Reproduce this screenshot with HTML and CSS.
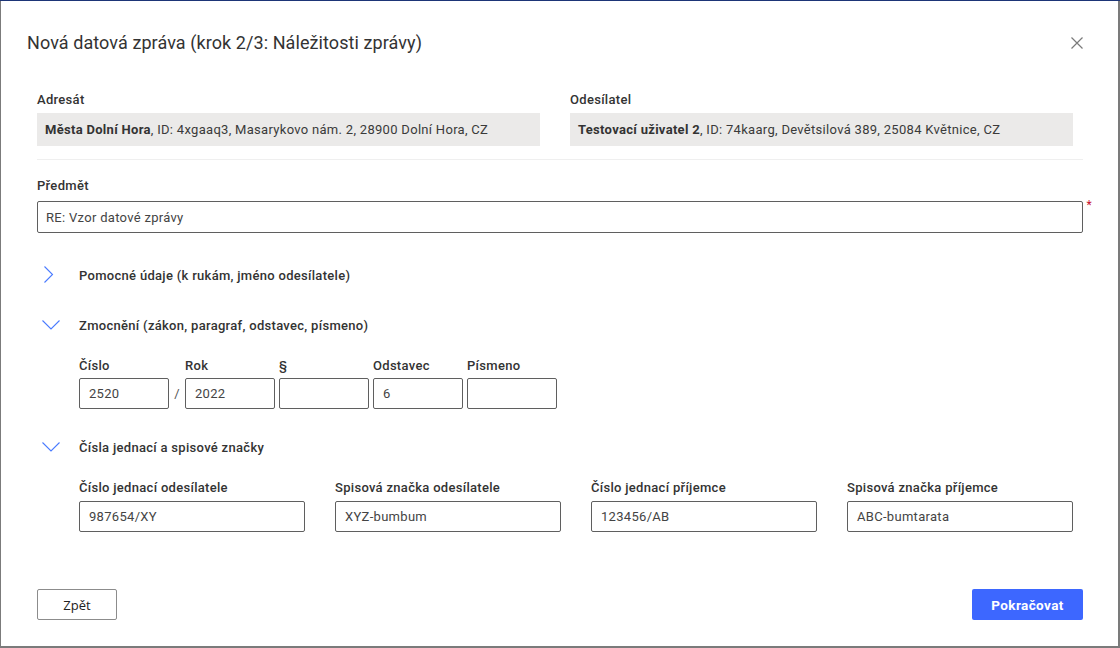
FILE: index.html
```html
<!DOCTYPE html>
<html lang="cs">
<head>
<meta charset="utf-8">
<title>Nová datová zpráva</title>
<link rel="stylesheet" href="styles.css">
</head>
<body>
<div class="backdrop">
  <div class="modal">
    <div class="modal-header">
      <h1 class="title">Nová datová zpráva (krok 2/3: Náležitosti zprávy)</h1>
      <button class="close" aria-label="Zavřít">
        <svg width="12" height="12" viewBox="0 0 12 12"><path d="M0.5 0.5 L11.5 11.5 M11.5 0.5 L0.5 11.5" stroke="#7a7a7a" stroke-width="1.2" fill="none"/></svg>
      </button>
    </div>
    <div class="modal-body">
      <div class="parties">
        <div class="party">
          <div class="label">Adresát</div>
          <div class="party-box"><b>Města Dolní Hora</b>, ID: 4xgaaq3, Masarykovo nám. 2, 28900 Dolní Hora, CZ</div>
        </div>
        <div class="party">
          <div class="label">Odesílatel</div>
          <div class="party-box"><b>Testovací uživatel 2</b>, ID: 74kaarg, Devětsilová 389, 25084 Květnice, CZ</div>
        </div>
      </div>
      <div class="divider"></div>
      <div class="subject">
        <div class="label">Předmět</div>
        <div class="input-wrap">
          <div class="input">RE: Vzor datové zprávy</div>
          <span class="req">*</span>
        </div>
      </div>

      <div class="acc-head">
        <span class="chev"><svg width="22" height="20" viewBox="0 0 22 20"><path d="M4.5 1.5 L12.5 9.5 L4.5 17.5" stroke="#4a7bff" stroke-width="1.1" fill="none"/></svg></span>
        <span class="acc-title">Pomocné údaje (k rukám, jméno odesílatele)</span>
      </div>

      <div class="acc-head">
        <span class="chev"><svg width="22" height="20" viewBox="0 0 22 20"><path d="M2.5 5.5 L11 14 L19.5 5.5" stroke="#4a7bff" stroke-width="1.1" fill="none"/></svg></span>
        <span class="acc-title">Zmocnění (zákon, paragraf, odstavec, písmeno)</span>
      </div>
      <div class="acc-body law">
        <div class="field small">
          <div class="label">Číslo</div>
          <div class="input">2520</div>
        </div>
        <div class="slash">/</div>
        <div class="field small">
          <div class="label">Rok</div>
          <div class="input">2022</div>
        </div>
        <div class="field small">
          <div class="label">§</div>
          <div class="input"></div>
        </div>
        <div class="field small">
          <div class="label">Odstavec</div>
          <div class="input">6</div>
        </div>
        <div class="field small">
          <div class="label">Písmeno</div>
          <div class="input"></div>
        </div>
      </div>

      <div class="acc-head">
        <span class="chev"><svg width="22" height="20" viewBox="0 0 22 20"><path d="M2.5 5.5 L11 14 L19.5 5.5" stroke="#4a7bff" stroke-width="1.1" fill="none"/></svg></span>
        <span class="acc-title">Čísla jednací a spisové značky</span>
      </div>
      <div class="acc-body refs">
        <div class="field">
          <div class="label">Číslo jednací odesílatele</div>
          <div class="input">987654/XY</div>
        </div>
        <div class="field">
          <div class="label">Spisová značka odesílatele</div>
          <div class="input">XYZ-bumbum</div>
        </div>
        <div class="field">
          <div class="label">Číslo jednací příjemce</div>
          <div class="input">123456/AB</div>
        </div>
        <div class="field">
          <div class="label">Spisová značka příjemce</div>
          <div class="input">ABC-bumtarata</div>
        </div>
      </div>
    </div>
    <div class="modal-footer">
      <button class="btn-back">Zpět</button>
      <button class="btn-next">Pokračovat</button>
    </div>
  </div>
</div>
</body>
</html>
```
FILE: styles.css
```css
* { box-sizing: border-box; }
html, body { margin: 0; padding: 0; }
body {
  width: 1120px;
  height: 648px;
  overflow: hidden;
  background: #7b7b7b;
  font-family: Roboto, "Liberation Sans", sans-serif;
  color: #333;
  letter-spacing: 0.3px;
}
.backdrop {
  border-top: 1px solid #1d3577;
  height: 648px;
  padding: 0 2px 0 1px;
}
.modal {
  background: #fff;
  height: 645px;
  display: flex;
  flex-direction: column;
}
.modal-header {
  display: flex;
  justify-content: space-between;
  align-items: center;
  padding: 30px 35px 0 26px;
  height: 54px;
}
.title {
  margin: 0;
  font-size: 18px;
  line-height: 24px;
  font-weight: 400;
  letter-spacing: 0.08px;
  color: #333;
}
.close {
  border: 0;
  background: none;
  padding: 0;
  width: 12px;
  height: 12px;
  display: flex;
}
.modal-body {
  padding: 37px 35px 0 36px;
  flex: 1;
}
.label {
  font-size: 13px;
  line-height: 16px;
  font-weight: 500;
  color: #333;
}
.parties {
  display: grid;
  grid-template-columns: 503px 503px;
  column-gap: 30px;
}
.party-box {
  margin-top: 5px;
  background: #ebeae9;
  height: 33px;
  display: flex;
  align-items: center;
  padding: 0 8px;
  font-size: 13px;
  color: #3a3a3a;
  white-space: nowrap;
}
.party-box b { font-weight: 700; color: #333; white-space: pre; }
.divider {
  margin-top: 13px;
  height: 1px;
  background: #efefef;
}
.subject { margin-top: 18px; }
.subject .label { margin-bottom: 7px; }
.input-wrap { position: relative; }
.input {
  height: 32px;
  border: 1px solid #5f5f5f;
  border-radius: 2px;
  display: flex;
  align-items: center;
  padding: 0 8px;
  font-size: 13px;
  color: #444;
  background: #fff;
}
.req {
  position: absolute;
  right: -9px;
  top: -2px;
  color: #c8102e;
  font-size: 12px;
  line-height: 12px;
}
.acc-head {
  height: 50px;
  display: flex;
  align-items: center;
}
.subject + .acc-head { margin-top: 17px; }
.chev {
  width: 42px;
  padding-left: 3px;
  display: flex;
  align-items: center;
}
.acc-title {
  font-size: 13px;
  font-weight: 500;
  color: #333;
}
.acc-body { padding-left: 42px; }
.law {
  display: flex;
  gap: 4px;
  margin-top: 8px;
  margin-bottom: 13px;
}
.law .input { padding: 0 9px; height: 31px; }
.field.small { width: 90px; }
.field .label { margin-bottom: 4px; }
.slash {
  width: 8px;
  align-self: flex-end;
  height: 31px;
  display: flex;
  align-items: center;
  justify-content: center;
  font-size: 13px;
  color: #555;
}
.refs {
  display: grid;
  grid-template-columns: repeat(4, 226px);
  column-gap: 30px;
  margin-top: 8px;
}
.refs .field .label { margin-bottom: 5px; }
.refs .input { padding: 0 9px; height: 31px; }
.modal-footer {
  display: flex;
  justify-content: space-between;
  padding: 0 35px 26px 36px;
}
.btn-back {
  width: 80px;
  height: 31px;
  border: 1px solid #8c8c8c;
  border-radius: 2px;
  background: #fff;
  font-family: "Open Sans", "DejaVu Sans", sans-serif;
  font-size: 13px;
  letter-spacing: 0;
  color: #222;
  padding: 0;
}
.btn-next {
  width: 111px;
  height: 31px;
  border: 0;
  border-radius: 2px;
  background: #3d67ff;
  color: #fff;
  font-family: Roboto, "Liberation Sans", sans-serif;
  font-size: 13.5px;
  font-weight: 700;
  letter-spacing: 0.4px;
  padding: 0;
}
```
